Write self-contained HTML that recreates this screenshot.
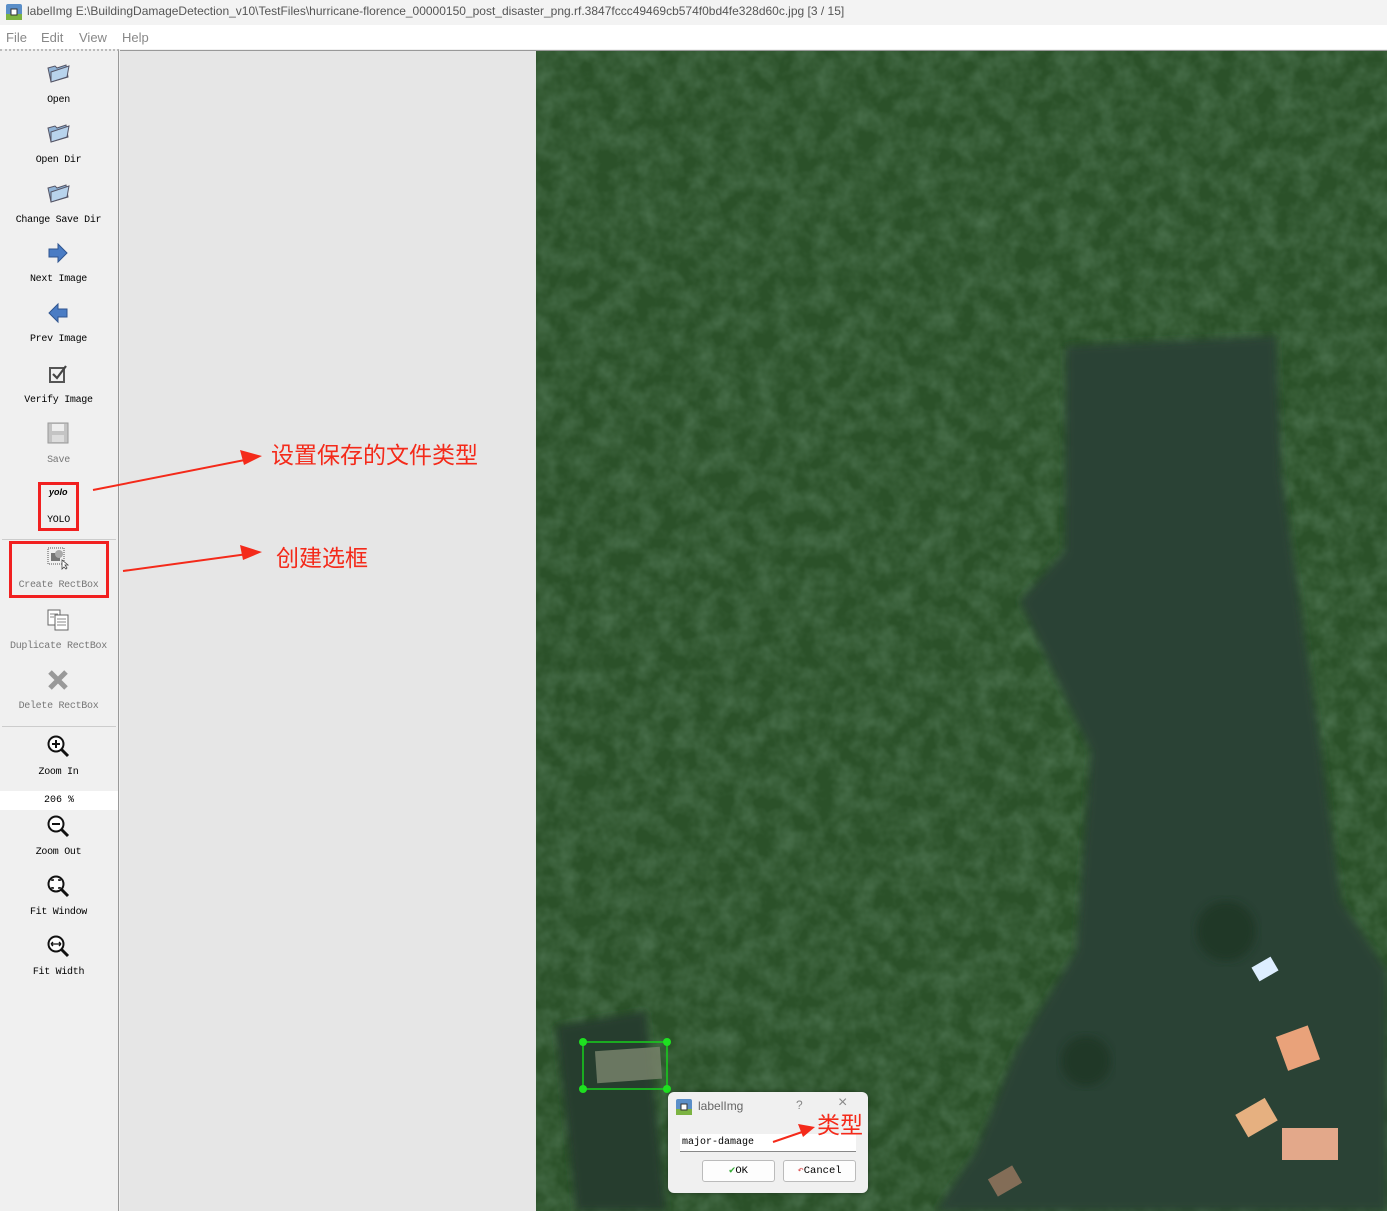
<!DOCTYPE html>
<html><head><meta charset="utf-8"><style>
*{margin:0;padding:0;box-sizing:border-box}
body{width:1387px;height:1211px;overflow:hidden;background:#f0f0f0;font-family:"Liberation Sans","Noto Sans CJK SC",sans-serif;position:relative}
.title{position:absolute;left:0;top:0;width:1387px;height:25px;background:#f3f3f3;font-size:12px;color:#555;line-height:22px;padding-left:27px}
.menu{position:absolute;left:0;top:25px;width:1387px;height:24px;background:#fff;font-size:13px;color:#888;line-height:26px}
.menu span{position:absolute}
.tb{position:absolute;left:0;top:49px;width:119px;height:1162px;background:#f0f0f0;border-top:2px dotted #bbb;border-right:1px solid #999}
.it{position:absolute;left:0;width:117px;text-align:center;font-family:"Liberation Mono",monospace;font-size:10px;letter-spacing:-0.3px;color:#000}
.it.dis{color:#777}
.ic{position:absolute;left:46px}
.sep{position:absolute;left:2px;width:114px;height:1px;background:#ccc}
.canvas{position:absolute;left:120px;top:50px;width:1267px;height:1161px;background:#e6e6e6;border-top:1px solid #999}
.red{position:absolute;border:3px solid #f12020}
.cn{position:absolute;color:#f42a1a;font-size:23px}
</style></head><body>
<div class="title"><svg style="position:absolute;left:6px;top:4px" width="16" height="16"><rect x="0" y="0" width="16" height="16" rx="2" fill="#5a8ec8"/><rect x="0" y="10" width="16" height="6" fill="#7cb342"/><rect x="5" y="5" width="6" height="6" fill="#fff" stroke="#333"/></svg>labelImg E:\BuildingDamageDetection_v10\TestFiles\hurricane-florence_00000150_post_disaster_png.rf.3847fccc49469cb574f0bd4fe328d60c.jpg [3 / 15]</div>
<div class="menu"><span style="left:6px">File</span><span style="left:41px">Edit</span><span style="left:79px">View</span><span style="left:122px">Help</span></div>
<div class="tb">
<svg class="ic" style="top:10px" width="24" height="24"><path d="M2 7 L9 5 L11 7 L20 4 L22 16 L5 21 Z" fill="#8fb3d6" stroke="#556"/><path d="M5 11 L23 5 L21 16 L5 21Z" fill="#b8d3ec" stroke="#556"/></svg>
<div class="it" style="top:44px">Open</div>
<svg class="ic" style="top:70px" width="24" height="24"><path d="M2 7 L9 5 L11 7 L20 4 L22 16 L5 21 Z" fill="#8fb3d6" stroke="#556"/><path d="M5 11 L23 5 L21 16 L5 21Z" fill="#b8d3ec" stroke="#556"/></svg>
<div class="it" style="top:104px">Open Dir</div>
<svg class="ic" style="top:130px" width="24" height="24"><path d="M2 7 L9 5 L11 7 L20 4 L22 16 L5 21 Z" fill="#8fb3d6" stroke="#556"/><path d="M5 11 L23 5 L21 16 L5 21Z" fill="#b8d3ec" stroke="#556"/></svg>
<div class="it" style="top:164px">Change Save Dir</div>
<svg class="ic" style="top:190px" width="24" height="24"><path d="M3 8 H12 V3 L21 12 L12 21 V16 H3Z" fill="#4a7cc4" stroke="#2f5590"/></svg>
<div class="it" style="top:223px">Next Image</div>
<svg class="ic" style="top:250px" width="24" height="24"><path d="M21 8 H12 V3 L3 12 L12 21 V16 H21Z" fill="#4a7cc4" stroke="#2f5590"/></svg>
<div class="it" style="top:283px">Prev Image</div>
<svg class="ic" style="top:312px" width="24" height="24"><rect x="4" y="5" width="14" height="14" fill="none" stroke="#555" stroke-width="2"/><path d="M7 11 L11 15 L20 3" fill="none" stroke="#444" stroke-width="2.2"/></svg>
<div class="it" style="top:344px">Verify Image</div>
<svg class="ic" style="top:370px" width="24" height="24"><rect x="2" y="2" width="20" height="20" fill="#c4c4c4" stroke="#999"/><rect x="6" y="3" width="12" height="7" fill="#eee"/><rect x="6" y="14" width="12" height="7" fill="#ddd"/></svg>
<div class="it dis" style="top:404px">Save</div>
<div style="position:absolute;left:49px;top:436px;font-size:9px;font-style:italic;font-weight:bold">yolo</div>
<div class="it" style="top:464px">YOLO</div>
<div class="sep" style="top:488px"></div>
<svg class="ic" style="top:495px" width="24" height="24"><rect x="2" y="2" width="16" height="16" fill="none" stroke="#555" stroke-dasharray="1,1"/><rect x="5" y="7" width="9" height="8" fill="#777"/><circle cx="13" cy="8" r="4" fill="#aaa"/><path d="M16 14 L16 23 L18 21 L20 23 L21 22 L19 19 L22 19Z" fill="#fff" stroke="#444" stroke-width=".8"/></svg>
<div class="it dis" style="top:529px">Create RectBox</div>
<svg class="ic" style="top:557px" width="24" height="24"><rect x="2" y="2" width="12" height="15" fill="#fff" stroke="#666"/><rect x="9" y="7" width="13" height="15" fill="#fff" stroke="#666"/><path d="M11 11h9M11 14h9M11 17h9M4 6h8M4 9h4" stroke="#888"/></svg>
<div class="it dis" style="top:590px">Duplicate RectBox</div>
<svg class="ic" style="top:617px" width="24" height="24"><path d="M4 4 L20 20 M20 4 L4 20" stroke="#999" stroke-width="5"/></svg>
<div class="it dis" style="top:650px">Delete RectBox</div>
<div class="sep" style="top:675px"></div>
<svg class="ic" style="top:683px" width="24" height="24"><circle cx="10" cy="10" r="7.5" fill="#fff" stroke="#111" stroke-width="2"/><path d="M6 10h8M10 6v8" stroke="#111" stroke-width="2"/><path d="M15 15 L22 22" stroke="#111" stroke-width="3"/></svg>
<div class="it" style="top:716px">Zoom In</div>
<div style="position:absolute;left:0;top:740px;width:118px;height:19px;background:#fff;font-family:'Liberation Mono',monospace;font-size:10px;text-align:center;line-height:19px">206 %</div>
<svg class="ic" style="top:763px" width="24" height="24"><circle cx="10" cy="10" r="7.5" fill="#fff" stroke="#111" stroke-width="2"/><path d="M6 10h8" stroke="#111" stroke-width="2"/><path d="M15 15 L22 22" stroke="#111" stroke-width="3"/></svg>
<div class="it" style="top:796px">Zoom Out</div>
<svg class="ic" style="top:823px" width="24" height="24"><circle cx="10" cy="10" r="7.5" fill="#fff" stroke="#111" stroke-width="2"/><path d="M6 7v-1h2M14 7v-1h-2M6 13v1h2M14 13v1h-2" stroke="#111" stroke-width="1.5" fill="none"/><path d="M15 15 L22 22" stroke="#111" stroke-width="3"/></svg>
<div class="it" style="top:856px">Fit Window</div>
<svg class="ic" style="top:883px" width="24" height="24"><circle cx="10" cy="10" r="7.5" fill="#fff" stroke="#111" stroke-width="2"/><path d="M5 10h10M5 10l2-2M5 10l2 2M15 10l-2-2M15 10l-2 2" stroke="#111" stroke-width="1.3" fill="none"/><path d="M15 15 L22 22" stroke="#111" stroke-width="3"/></svg>
<div class="it" style="top:916px">Fit Width</div>
</div>
<div class="canvas"></div>
<svg style="position:absolute;left:536px;top:51px" width="851" height="1160">
<defs><filter id="n"><feTurbulence type="fractalNoise" baseFrequency="0.05" numOctaves="3" seed="3"/><feColorMatrix values="0 0 0 0 0.09  0 0 0 0 0.2  0 0 0 0 0.1  0 0 0 1.2 -0.35"/></filter>
<filter id="b"><feGaussianBlur stdDeviation="4"/></filter></defs>
<rect width="851" height="1160" fill="#2b5129"/>
<rect width="851" height="1160" filter="url(#n)" opacity="0.9"/>
<g filter="url(#b)">
<path d="M530 295 L740 285 L745 420 L785 700 L805 850 L851 920 L851 1160 L400 1160 L440 1100 L480 1000 L540 900 L555 700 L484 550 L529 500Z" fill="#2a4234"/>
<path d="M20 975 L110 960 L130 1160 L40 1160Z" fill="#263c2f"/>
</g>
<circle cx="690" cy="880" r="30" fill="#1f3424" opacity=".7" filter="url(#b)"/>
<circle cx="550" cy="1010" r="25" fill="#1f3424" opacity=".7" filter="url(#b)"/>
<rect x="60" y="998" width="65" height="32" fill="#77816a" opacity="0.85" transform="rotate(-4 92 1014)"/>
<rect x="47" y="991" width="84" height="47" fill="none" stroke="#16d01c" stroke-width="1.5"/>
<circle cx="47" cy="991" r="4" fill="#1ee020"/><circle cx="131" cy="991" r="4" fill="#1ee020"/><circle cx="47" cy="1038" r="4" fill="#1ee020"/><circle cx="131" cy="1038" r="4" fill="#1ee020"/>
<rect x="718" y="910" width="22" height="16" fill="#ddeeff" transform="rotate(-30 729 918)"/>
<rect x="744" y="980" width="34" height="36" fill="#e9a27a" transform="rotate(-20 759 995)"/>
<rect x="702" y="1054" width="34" height="26" fill="#e6b080" transform="rotate(-30 719 1064)"/>
<rect x="746" y="1077" width="56" height="32" fill="#e3a88a"/>
<rect x="455" y="1120" width="28" height="20" fill="#9a7860" opacity=".8" transform="rotate(-30 469 1130)"/>
</svg>
<div class="red" style="left:38px;top:482px;width:41px;height:49px"></div>
<div class="red" style="left:9px;top:541px;width:100px;height:57px"></div>
<svg style="position:absolute;left:0;top:0" width="1387" height="1211"><path d="M93 490 L255 458" stroke="#f42a1a" stroke-width="2"/><path d="M262 456 L240 450 L244 465Z" fill="#f42a1a"/><path d="M123 571 L255 553" stroke="#f42a1a" stroke-width="2"/><path d="M262 552 L240 545 L243 560Z" fill="#f42a1a"/></svg>
<div class="cn" style="left:271px;top:436px">设置保存的文件类型</div>
<div class="cn" style="left:276px;top:539px">创建选框</div>
<div style="position:absolute;left:668px;top:1092px;width:200px;height:101px;background:#f0f0f0;border-radius:6px;box-shadow:0 0 4px rgba(0,0,0,.4)">
<svg style="position:absolute;left:8px;top:7px" width="16" height="16"><rect width="16" height="16" rx="2" fill="#5a8ec8"/><rect y="10" width="16" height="6" fill="#7cb342"/><rect x="5" y="5" width="6" height="6" fill="#fff" stroke="#333"/></svg>
<div style="position:absolute;left:30px;top:7px;font-size:12px;color:#666">labelImg</div>
<div style="position:absolute;left:128px;top:6px;font-size:12px;color:#888">?</div>
<div style="position:absolute;left:170px;top:2px;font-size:16px;color:#888">×</div>
<div style="position:absolute;left:12px;top:42px;width:176px;height:18px;background:#fff;border-bottom:1px solid #888;font-family:'Liberation Mono',monospace;font-size:10px;line-height:18px;padding-left:2px">major-damage</div>
<div style="position:absolute;left:34px;top:68px;width:73px;height:22px;background:#fdfdfd;border:1px solid #bbb;border-radius:3px;font-family:'Liberation Mono',monospace;font-size:10.5px;line-height:20px;text-align:center"><span style="color:#3a3">✔</span>OK</div>
<div style="position:absolute;left:115px;top:68px;width:73px;height:22px;background:#fdfdfd;border:1px solid #bbb;border-radius:3px;font-family:'Liberation Mono',monospace;font-size:10.5px;line-height:20px;text-align:center"><span style="color:#d55">↶</span>Cancel</div>
</div>
<svg style="position:absolute;left:0;top:0" width="1387" height="1211"><path d="M773 1142 L808 1130" stroke="#f42a1a" stroke-width="2"/><path d="M815 1127 L798 1124 L803 1137Z" fill="#f42a1a"/></svg>
<div class="cn" style="left:817px;top:1106px">类型</div>
</body></html>
